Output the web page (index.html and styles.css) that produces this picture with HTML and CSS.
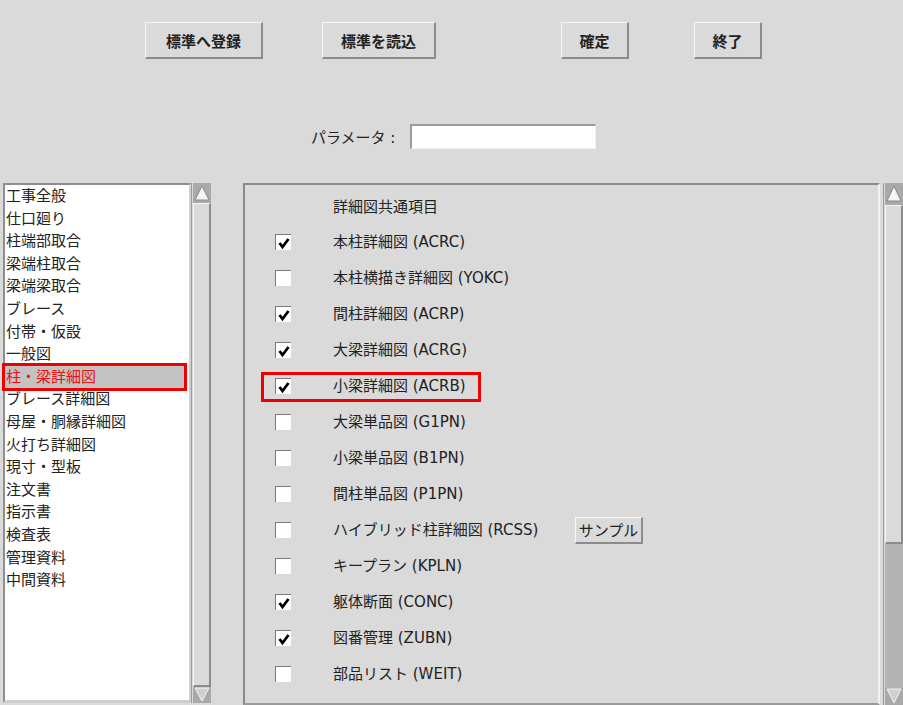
FILE: index.html
```html
<!DOCTYPE html>
<html lang="ja">
<head>
<meta charset="utf-8">
<title>詳細図設定</title>
<link rel="stylesheet" href="styles.css">
</head>
<body>
<div class="toolbar">
  <button class="btn b1">標準へ登録</button>
  <button class="btn b2">標準を読込</button>
  <button class="btn b3">確定</button>
  <button class="btn b4">終了</button>
</div>
<div class="param">
  <span class="param-label">パラメータ :</span>
  <span class="param-input"></span>
</div>
<div class="main">
  <div class="list">
    <div class="li">工事全般</div>
    <div class="li">仕口廻り</div>
    <div class="li">柱端部取合</div>
    <div class="li">梁端柱取合</div>
    <div class="li">梁端梁取合</div>
    <div class="li">ブレース</div>
    <div class="li">付帯・仮設</div>
    <div class="li">一般図</div>
    <div class="li sel">柱・梁詳細図</div>
    <div class="li">ブレース詳細図</div>
    <div class="li">母屋・胴縁詳細図</div>
    <div class="li">火打ち詳細図</div>
    <div class="li">現寸・型板</div>
    <div class="li">注文書</div>
    <div class="li">指示書</div>
    <div class="li">検査表</div>
    <div class="li">管理資料</div>
    <div class="li">中間資料</div>
  </div>
  <div class="sbar">
    <svg class="arrow" viewBox="0 0 18 20" width="18" height="20"><rect width="18" height="20" fill="#a9a9a9"/><polygon points="9,3 16,17 2,17" fill="#f4f4f4" stroke="#8a8a8a" stroke-width="1"/></svg>
    <div class="thumb full"></div>
    <svg class="arrow" viewBox="0 0 18 16" width="18" height="16"><rect width="18" height="16" fill="#a9a9a9"/><polygon points="2,1 16,1 9,14" fill="#d0d0d0" stroke="#f4f4f4" stroke-width="1"/></svg>
  </div>
  <div class="panel">
    <div class="row"><span class="cb-space"></span><span class="lbl">詳細図共通項目</span></div>
    <div class="row"><span class="cb on"><svg viewBox="0 0 14 14" width="14" height="14"><polyline points="2.5,7 5.5,11 11.5,3" fill="none" stroke="#000" stroke-width="2.8"/></svg></span><span class="lbl">本柱詳細図 (ACRC)</span></div>
    <div class="row"><span class="cb"></span><span class="lbl">本柱横描き詳細図 (YOKC)</span></div>
    <div class="row"><span class="cb on"><svg viewBox="0 0 14 14" width="14" height="14"><polyline points="2.5,7 5.5,11 11.5,3" fill="none" stroke="#000" stroke-width="2.8"/></svg></span><span class="lbl">間柱詳細図 (ACRP)</span></div>
    <div class="row"><span class="cb on"><svg viewBox="0 0 14 14" width="14" height="14"><polyline points="2.5,7 5.5,11 11.5,3" fill="none" stroke="#000" stroke-width="2.8"/></svg></span><span class="lbl">大梁詳細図 (ACRG)</span></div>
    <div class="row"><span class="item hl"><span class="cb on"><svg viewBox="0 0 14 14" width="14" height="14"><polyline points="2.5,7 5.5,11 11.5,3" fill="none" stroke="#000" stroke-width="2.8"/></svg></span><span class="lbl">小梁詳細図 (ACRB)</span></span></div>
    <div class="row"><span class="cb"></span><span class="lbl">大梁単品図 (G1PN)</span></div>
    <div class="row"><span class="cb"></span><span class="lbl">小梁単品図 (B1PN)</span></div>
    <div class="row"><span class="cb"></span><span class="lbl">間柱単品図 (P1PN)</span></div>
    <div class="row"><span class="cb"></span><span class="lbl wide">ハイブリッド柱詳細図 (RCSS)</span><button class="btn sample">サンプル</button></div>
    <div class="row"><span class="cb"></span><span class="lbl">キープラン (KPLN)</span></div>
    <div class="row"><span class="cb on"><svg viewBox="0 0 14 14" width="14" height="14"><polyline points="2.5,7 5.5,11 11.5,3" fill="none" stroke="#000" stroke-width="2.8"/></svg></span><span class="lbl">躯体断面 (CONC)</span></div>
    <div class="row"><span class="cb on"><svg viewBox="0 0 14 14" width="14" height="14"><polyline points="2.5,7 5.5,11 11.5,3" fill="none" stroke="#000" stroke-width="2.8"/></svg></span><span class="lbl">図番管理 (ZUBN)</span></div>
    <div class="row"><span class="cb"></span><span class="lbl">部品リスト (WEIT)</span></div>
  </div>
  <div class="sbar right">
    <svg class="arrow" viewBox="0 0 18 22" width="18" height="22"><rect width="18" height="22" fill="#a9a9a9"/><polygon points="9,3 16,18 2,18" fill="#f4f4f4" stroke="#8a8a8a" stroke-width="1"/></svg>
    <div class="thumb part"></div>
    <div class="trough"></div>
    <svg class="arrow" viewBox="0 0 18 17" width="18" height="17"><rect width="18" height="17" fill="#a9a9a9"/><polygon points="2,1 16,1 9,15" fill="#d0d0d0" stroke="#f4f4f4" stroke-width="1"/></svg>
  </div>
</div>
</body>
</html>
```
FILE: styles.css
```css
html, body {
  margin: 0;
  padding: 0;
  background: #dadada;
  width: 903px;
  height: 705px;
  overflow: hidden;
  font-family: "DejaVu Sans", "Noto Sans CJK JP", sans-serif;
  color: #222;
}

.btn {
  font-family: "DejaVu Sans", "Noto Sans CJK JP", sans-serif;
  background: #dadada;
  border-style: solid;
  border-width: 1px 2px 2px 1px;
  border-color: #f7f7f7 #8c8c8c #8c8c8c #f7f7f7;
  color: #222;
  padding: 0;
  font-size: 15px;
  font-weight: 600;
  cursor: default;
}

.toolbar {
  display: flex;
  padding-top: 22px;
  height: 37px;
}
.toolbar .btn { height: 37px; }
.b1 { margin-left: 145px; width: 118px; }
.b2 { margin-left: 59px; width: 114px; }
.b3 { margin-left: 125px; width: 68px; }
.b4 { margin-left: 65px; width: 68px; }

.param {
  display: flex;
  align-items: center;
  margin-top: 65px;
  height: 25px;
  padding-left: 311px;
}
.param-label {
  font-size: 15px;
  width: 99px;
}
.param-input {
  width: 183px;
  height: 22px;
  background: #fff;
  border-style: solid;
  border-width: 2px 1px 1px 2px;
  border-color: #9a9a9a #f0f0f0 #f0f0f0 #9a9a9a;
}

.main {
  display: flex;
  margin-top: 34px;
  height: 522px;
}

.list {
  margin-left: 3px;
  width: 184px;
  height: 515px;
  background: #fff;
  border-style: solid;
  border-width: 2px 2px 3px 2px;
  border-color: #8e8e8e #cfcfcf #cfcfcf #8e8e8e;
  font-size: 15px;
}
.li {
  height: 22.6px;
  line-height: 22.6px;
  padding-left: 1px;
  white-space: nowrap;
}
.li.sel {
  background: #c3c3c3;
  color: #ee1111;
  margin-right: 5px;
  outline: 3px solid #ee0000;
}

.sbar {
  width: 20px;
  height: 520px;
  display: flex;
  flex-direction: column;
  align-items: center;
  border-left: 1px solid #9a9a9a;
  box-sizing: border-box;
}
.sbar .arrow { display: block; flex: none; }
.thumb {
  width: 18px;
  box-sizing: border-box;
  background: #dadada;
  border-style: solid;
  border-width: 1px 2px 2px 1px;
  border-color: #f5f5f5 #8c8c8c #8c8c8c #f5f5f5;
}
.thumb.full { flex: 1; }
.thumb.part { height: 339px; flex: none; }
.trough {
  flex: 1;
  width: 18px;
  background: #b3b3b3;
}

.panel {
  margin-left: 32px;
  width: 637px;
  box-sizing: border-box;
  height: 522px;
  border-style: solid;
  border-width: 2px 0 0 2px;
  border-color: #8a8a8a;
  border-bottom: 2px solid #9a9a9a;
  border-right: 2px solid #f2f2f2;
  padding-top: 4px;
  padding-left: 30px;
  font-size: 15px;
}
.right {
  margin-left: 3px;
  height: 522px;
}

.row {
  display: flex;
  align-items: center;
  height: 36px;
}
.row:first-child { height: 35px; }
.item {
  display: flex;
  align-items: center;
}
.item.hl {
  outline: 3px solid #ee0000;
  padding: 0 12px 2px 11px;
  margin: 0 -12px -2px -11px;
  height: 22px;
}
.cb, .cb-space {
  width: 16px;
  height: 16px;
  box-sizing: border-box;
  flex: none;
  margin-right: 42px;
}
.cb {
  background: #fff;
  border-style: solid;
  border-width: 1px 0 0 1px;
  border-color: #7a7a7a;
  display: flex;
  align-items: center;
  justify-content: center;
}
.cb svg { display: block; }
.lbl {
  white-space: nowrap;
  line-height: 20px;
}
.lbl.wide { width: 242px; }
.sample {
  width: 68px;
  height: 27px;
  font-weight: 400;
  font-size: 15px;
}
```
